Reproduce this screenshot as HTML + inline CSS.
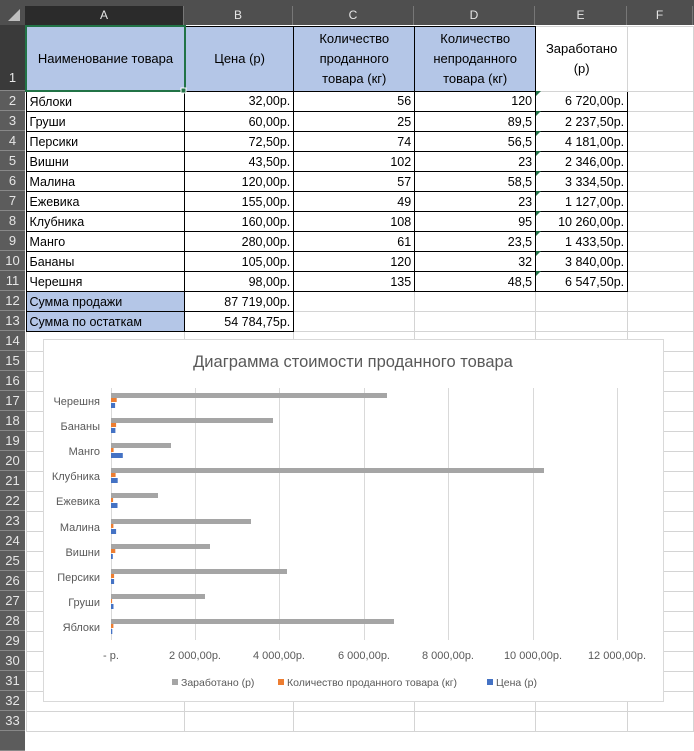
<!DOCTYPE html>
<html><head><meta charset="utf-8"><style>
body{margin:0;width:694px;height:734px;overflow:hidden;background:#fff;font-family:"Liberation Sans",sans-serif;position:relative}
.top{position:absolute;left:0;top:0;width:694px;height:25px;background:#4f4f4f}
.ch{position:absolute;top:6px;height:19px;color:#e6e6e6;font-size:12px;text-align:center;line-height:19px;border-right:1px solid #777;box-sizing:border-box}
.rh{position:absolute;left:0;width:25px;background:#5c5c5c;color:#e6e6e6;font-size:13px;text-align:center;border-bottom:1px solid #888;box-sizing:border-box;line-height:19px}
table{position:absolute;left:25px;top:25px;border-collapse:collapse;table-layout:fixed;font-size:12.5px;color:#000}
td{border:1px solid #d4d4d4;height:19px;padding:0 3px;white-space:nowrap;overflow:hidden;line-height:18px}
td.b{border:1px solid #000}
td.r{text-align:right}
td.h{background:#b4c6e7;text-align:center;white-space:normal;line-height:20px;height:63px;padding:0 8px;font-size:13px}
td.f{background:#b4c6e7}
</style></head><body>
<div class="top"></div>
<div style="position:absolute;left:0;top:0;width:25px;height:25px;background:#4f4f4f"></div>
<div style="position:absolute;left:8px;top:9px;width:0;height:0;border-left:12px solid transparent;border-bottom:12px solid #bfbfbf"></div>
<div class="ch" style="left:25px;width:159px;background:#2b2b2b">A</div>
<div class="ch" style="left:184px;width:109px">B</div>
<div class="ch" style="left:293px;width:121px">C</div>
<div class="ch" style="left:414px;width:121px">D</div>
<div class="ch" style="left:535px;width:92px">E</div>
<div class="ch" style="left:627px;width:66px">F</div>
<div class="rh" style="top:25px;height:66px;line-height:106px;background:#3a3a3a">1</div>
<div class="rh" style="top:91px;height:20px">2</div>
<div class="rh" style="top:111px;height:20px">3</div>
<div class="rh" style="top:131px;height:20px">4</div>
<div class="rh" style="top:151px;height:20px">5</div>
<div class="rh" style="top:171px;height:20px">6</div>
<div class="rh" style="top:191px;height:20px">7</div>
<div class="rh" style="top:211px;height:20px">8</div>
<div class="rh" style="top:231px;height:20px">9</div>
<div class="rh" style="top:251px;height:20px">10</div>
<div class="rh" style="top:271px;height:20px">11</div>
<div class="rh" style="top:291px;height:20px">12</div>
<div class="rh" style="top:311px;height:20px">13</div>
<div class="rh" style="top:331px;height:20px">14</div>
<div class="rh" style="top:351px;height:20px">15</div>
<div class="rh" style="top:371px;height:20px">16</div>
<div class="rh" style="top:391px;height:20px">17</div>
<div class="rh" style="top:411px;height:20px">18</div>
<div class="rh" style="top:431px;height:20px">19</div>
<div class="rh" style="top:451px;height:20px">20</div>
<div class="rh" style="top:471px;height:20px">21</div>
<div class="rh" style="top:491px;height:20px">22</div>
<div class="rh" style="top:511px;height:20px">23</div>
<div class="rh" style="top:531px;height:20px">24</div>
<div class="rh" style="top:551px;height:20px">25</div>
<div class="rh" style="top:571px;height:20px">26</div>
<div class="rh" style="top:591px;height:20px">27</div>
<div class="rh" style="top:611px;height:20px">28</div>
<div class="rh" style="top:631px;height:20px">29</div>
<div class="rh" style="top:651px;height:20px">30</div>
<div class="rh" style="top:671px;height:20px">31</div>
<div class="rh" style="top:691px;height:20px">32</div>
<div class="rh" style="top:711px;height:20px">33</div>
<div class="rh" style="top:731px;height:20px"></div>
<table>
<colgroup><col style="width:159px"><col style="width:109px"><col style="width:121px"><col style="width:121px"><col style="width:92px"><col style="width:66px"></colgroup>
<tr><td class="b h" style="border:2px solid #217346">Наименование товара</td><td class="b h">Цена (р)</td><td class="b h">Количество проданного товара (кг)</td><td class="b h">Количество непроданного товара (кг)</td><td class="h" style="background:#fff">Заработано (р)</td><td></td></tr>
<tr><td class="b">Яблоки</td><td class="b r">32,00р.</td><td class="b r">56</td><td class="b r">120</td><td class="b r">6 720,00р.</td><td></td></tr>
<tr><td class="b">Груши</td><td class="b r">60,00р.</td><td class="b r">25</td><td class="b r">89,5</td><td class="b r">2 237,50р.</td><td></td></tr>
<tr><td class="b">Персики</td><td class="b r">72,50р.</td><td class="b r">74</td><td class="b r">56,5</td><td class="b r">4 181,00р.</td><td></td></tr>
<tr><td class="b">Вишни</td><td class="b r">43,50р.</td><td class="b r">102</td><td class="b r">23</td><td class="b r">2 346,00р.</td><td></td></tr>
<tr><td class="b">Малина</td><td class="b r">120,00р.</td><td class="b r">57</td><td class="b r">58,5</td><td class="b r">3 334,50р.</td><td></td></tr>
<tr><td class="b">Ежевика</td><td class="b r">155,00р.</td><td class="b r">49</td><td class="b r">23</td><td class="b r">1 127,00р.</td><td></td></tr>
<tr><td class="b">Клубника</td><td class="b r">160,00р.</td><td class="b r">108</td><td class="b r">95</td><td class="b r">10 260,00р.</td><td></td></tr>
<tr><td class="b">Манго</td><td class="b r">280,00р.</td><td class="b r">61</td><td class="b r">23,5</td><td class="b r">1 433,50р.</td><td></td></tr>
<tr><td class="b">Бананы</td><td class="b r">105,00р.</td><td class="b r">120</td><td class="b r">32</td><td class="b r">3 840,00р.</td><td></td></tr>
<tr><td class="b">Черешня</td><td class="b r">98,00р.</td><td class="b r">135</td><td class="b r">48,5</td><td class="b r">6 547,50р.</td><td></td></tr>
<tr><td class="b f">Сумма продажи</td><td class="b r">87 719,00р.</td><td></td><td></td><td></td><td></td></tr>
<tr><td class="b f">Сумма по остаткам</td><td class="b r">54 784,75р.</td><td></td><td></td><td></td><td></td></tr>
<tr><td></td><td></td><td></td><td></td><td></td><td></td></tr>
<tr><td></td><td></td><td></td><td></td><td></td><td></td></tr>
<tr><td></td><td></td><td></td><td></td><td></td><td></td></tr>
<tr><td></td><td></td><td></td><td></td><td></td><td></td></tr>
<tr><td></td><td></td><td></td><td></td><td></td><td></td></tr>
<tr><td></td><td></td><td></td><td></td><td></td><td></td></tr>
<tr><td></td><td></td><td></td><td></td><td></td><td></td></tr>
<tr><td></td><td></td><td></td><td></td><td></td><td></td></tr>
<tr><td></td><td></td><td></td><td></td><td></td><td></td></tr>
<tr><td></td><td></td><td></td><td></td><td></td><td></td></tr>
<tr><td></td><td></td><td></td><td></td><td></td><td></td></tr>
<tr><td></td><td></td><td></td><td></td><td></td><td></td></tr>
<tr><td></td><td></td><td></td><td></td><td></td><td></td></tr>
<tr><td></td><td></td><td></td><td></td><td></td><td></td></tr>
<tr><td></td><td></td><td></td><td></td><td></td><td></td></tr>
<tr><td></td><td></td><td></td><td></td><td></td><td></td></tr>
<tr><td></td><td></td><td></td><td></td><td></td><td></td></tr>
<tr><td></td><td></td><td></td><td></td><td></td><td></td></tr>
<tr><td></td><td></td><td></td><td></td><td></td><td></td></tr>
<tr><td></td><td></td><td></td><td></td><td></td><td></td></tr>
</table>
<svg style="position:absolute;left:0;top:0" width="694" height="734" viewBox="0 0 694 734">
<g fill="#217346"><path d="M536 91h5l-5 5z"/><path d="M536 111h5l-5 5z"/><path d="M536 131h5l-5 5z"/><path d="M536 151h5l-5 5z"/><path d="M536 171h5l-5 5z"/><path d="M536 191h5l-5 5z"/><path d="M536 211h5l-5 5z"/><path d="M536 231h5l-5 5z"/><path d="M536 251h5l-5 5z"/><path d="M536 271h5l-5 5z"/></g>
<rect x="181" y="88" width="5" height="5" fill="#217346" stroke="#fff" stroke-width="1"/>
<rect x="43.5" y="339.5" width="620" height="362" fill="#fff" stroke="#d9d9d9"/>
<text x="353" y="367" text-anchor="middle" font-family="Liberation Sans" font-size="16.5" fill="#595959">Диаграмма стоимости проданного товара</text>
<g stroke="#d9d9d9" stroke-width="1">
<line x1="195.5" y1="388" x2="195.5" y2="640"/><line x1="279.5" y1="388" x2="279.5" y2="640"/><line x1="364.5" y1="388" x2="364.5" y2="640"/><line x1="448.5" y1="388" x2="448.5" y2="640"/><line x1="533.5" y1="388" x2="533.5" y2="640"/><line x1="617.5" y1="388" x2="617.5" y2="640"/>
<line x1="111.5" y1="388" x2="111.5" y2="640"/></g>
<g font-family="Liberation Sans" font-size="11" fill="#595959" text-anchor="end">
<text x="100" y="405">Черешня</text><text x="100" y="430">Бананы</text><text x="100" y="455">Манго</text><text x="100" y="480">Клубника</text><text x="100" y="505">Ежевика</text><text x="100" y="531">Малина</text><text x="100" y="556">Вишни</text><text x="100" y="581">Персики</text><text x="100" y="606">Груши</text><text x="100" y="631">Яблоки</text>
</g>
<g font-family="Liberation Sans" font-size="11" fill="#595959" text-anchor="middle">
<text x="111" y="659">-  р.</text><text x="195" y="659">2 000,00р.</text><text x="279" y="659">4 000,00р.</text><text x="364" y="659">6 000,00р.</text><text x="448" y="659">8 000,00р.</text><text x="533" y="659">10 000,00р.</text><text x="617" y="659">12 000,00р.</text>
</g>
<g fill="#a5a5a5">
<rect x="111" y="393" width="276" height="5"/><rect x="111" y="418" width="162" height="5"/><rect x="111" y="443" width="60" height="5"/><rect x="111" y="468" width="433" height="5"/><rect x="111" y="493" width="47" height="5"/><rect x="111" y="519" width="140" height="5"/><rect x="111" y="544" width="99" height="5"/><rect x="111" y="569" width="176" height="5"/><rect x="111" y="594" width="94" height="5"/><rect x="111" y="619" width="283" height="5"/>
</g>
<g fill="#ed7d31">
<rect x="111" y="398" width="5.7" height="4"/><rect x="111" y="423" width="5.1" height="4"/><rect x="111" y="448" width="2.6" height="4"/><rect x="111" y="473" width="4.6" height="4"/><rect x="111" y="498" width="2.1" height="4"/><rect x="111" y="524" width="2.4" height="4"/><rect x="111" y="549" width="4.3" height="4"/><rect x="111" y="574" width="3.1" height="4"/><rect x="111" y="599" width="1.1" height="4"/><rect x="111" y="624" width="2.4" height="4"/>
</g>
<g fill="#4472c4">
<rect x="111" y="403" width="4.1" height="5"/><rect x="111" y="428" width="4.4" height="5"/><rect x="111" y="453" width="11.8" height="5"/><rect x="111" y="478" width="6.7" height="5"/><rect x="111" y="503" width="6.5" height="5"/><rect x="111" y="529" width="5.1" height="5"/><rect x="111" y="554" width="1.8" height="5"/><rect x="111" y="579" width="3.1" height="5"/><rect x="111" y="604" width="2.5" height="5"/><rect x="111" y="629" width="1.3" height="5"/>
</g>
<g font-family="Liberation Sans" font-size="10.5" fill="#595959">
<rect x="172" y="679" width="6" height="6" fill="#a5a5a5"/><text x="181" y="686">Заработано (р)</text>
<rect x="278" y="679" width="6" height="6" fill="#ed7d31"/><text x="287" y="686">Количество проданного товара (кг)</text>
<rect x="487" y="679" width="6" height="6" fill="#4472c4"/><text x="496" y="686">Цена (р)</text>
</g>
</svg>
</body></html>
